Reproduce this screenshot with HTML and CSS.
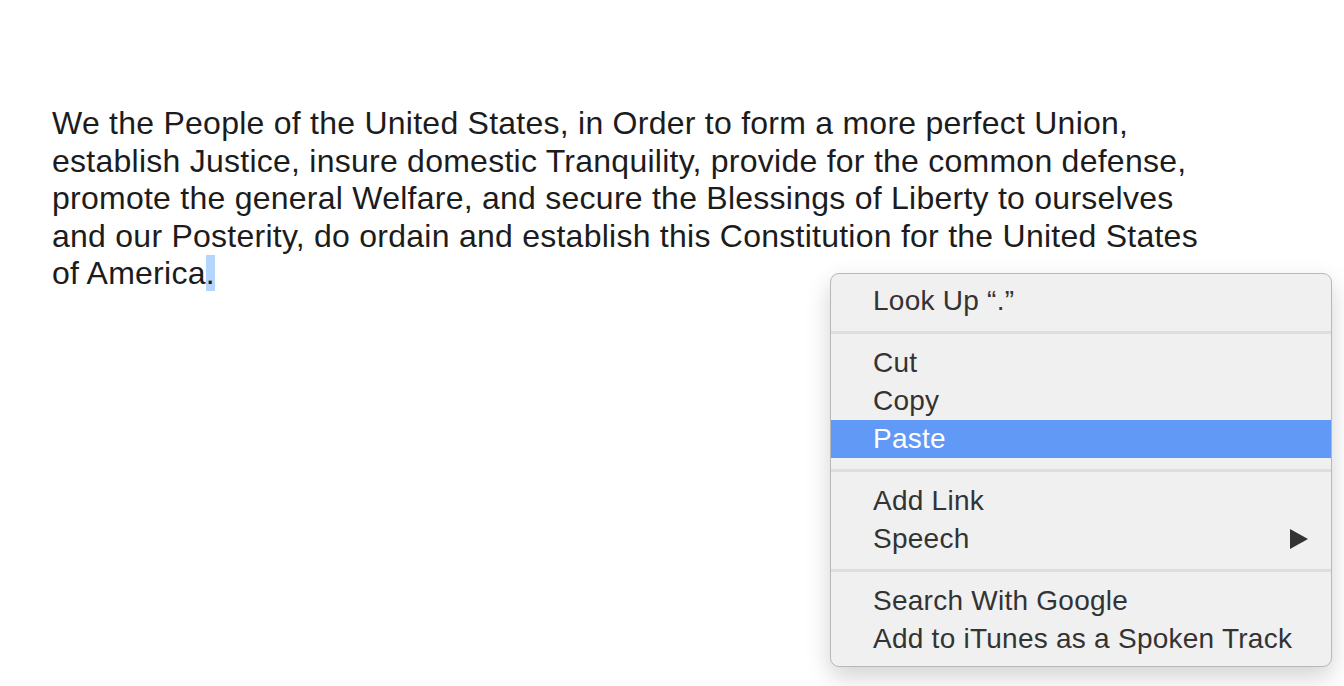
FILE: index.html
```html
<!DOCTYPE html>
<html>
<head>
<meta charset="utf-8">
<link rel="stylesheet" href="styles.css">
</head>
<body>
<div class="doc">
  <p class="text">We the People of the United States, in Order to form a more perfect Union,<br>establish Justice, insure domestic Tranquility, provide for the common defense,<br>promote the general Welfare, and secure the Blessings of Liberty to ourselves<br>and our Posterity, do ordain and establish this Constitution for the United States<br>of America<span class="sel">.</span></p>
</div>
<div class="menu">
  <div class="item">Look Up “.”</div>
  <div class="sep"></div>
  <div class="item">Cut</div>
  <div class="item">Copy</div>
  <div class="item active">Paste</div>
  <div class="sep"></div>
  <div class="item">Add Link</div>
  <div class="item has-sub">Speech<svg class="arrow" width="18" height="20" viewBox="0 0 18 20"><path d="M0 0 L18 10 L0 20 Z" fill="#333"/></svg></div>
  <div class="sep"></div>
  <div class="item">Search With Google</div>
  <div class="item">Add to iTunes as a Spoken Track</div>
</div>
</body>
</html>
```
FILE: styles.css
```css
html, body {
  margin: 0;
  padding: 0;
  background: #ffffff;
}
body {
  width: 1344px;
  height: 686px;
  overflow: hidden;
  position: relative;
  font-family: "Liberation Sans", Arial, sans-serif;
}
.doc {
  padding: 105px 0 0 52px;
}
.text {
  margin: 0;
  font-size: 32px;
  letter-spacing: 0.25px;
  line-height: 37.5px;
  color: #1c1c1c;
}
.sel {
  background: #b4d5fe;
}
.menu {
  position: absolute;
  left: 830px;
  top: 273px;
  width: 500px;
  padding: 8px 0;
  background: #f0f0f0;
  border: 1px solid #b8b8b8;
  border-radius: 9px;
  box-shadow: 0 10px 24px rgba(0,0,0,0.18);
  font-size: 28px;
  letter-spacing: 0.25px;
  color: #333333;
}
.item {
  height: 38px;
  line-height: 38px;
  padding-left: 42px;
  padding-right: 23px;
  display: flex;
  align-items: center;
  justify-content: space-between;
}
.item.active {
  background: #6199f7;
  color: #ffffff;
}
.sep {
  height: 3px;
  background: #dedede;
  margin: 11px 0 10px;
}
.arrow {
  display: block;
}
```
